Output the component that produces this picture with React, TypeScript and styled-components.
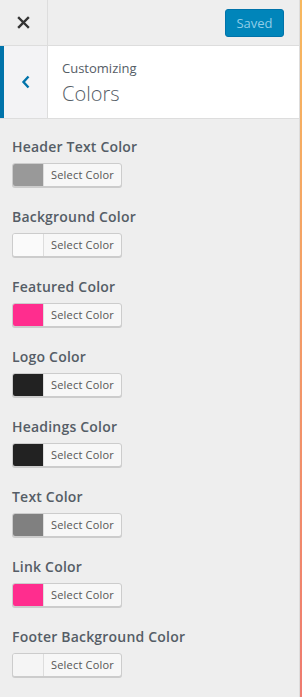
import * as React from 'react'
import styled, { createGlobalStyle } from 'styled-components'

const GlobalStyle = createGlobalStyle`
  html, body {
    margin: 0;
    padding: 0;
    background: #eeeeee;
  }
  body {
    font-family: "Open Sans", "Noto Sans", sans-serif;
  }
`

const colors = [
  { label: 'Header Text Color', value: '#999999' },
  { label: 'Background Color', value: '#fafafa' },
  { label: 'Featured Color', value: '#ff2d8e' },
  { label: 'Logo Color', value: '#222222' },
  { label: 'Headings Color', value: '#222222' },
  { label: 'Text Color', value: '#808080' },
  { label: 'Link Color', value: '#ff2d8e' },
  { label: 'Footer Background Color', value: '#f5f5f5' }
]

const App = () => (
  <Frame>
    <GlobalStyle />
    <Sidebar>
      <Header>
        <CloseButton aria-label='Close'>
          <svg width='13' height='13' viewBox='0 0 13 13'>
            <path d='M2 2 L11 11 M11 2 L2 11' stroke='#333' strokeWidth='2.4' strokeLinecap='square' />
          </svg>
        </CloseButton>
        <SaveButton>Saved</SaveButton>
      </Header>
      <SectionTitle>
        <BackButton aria-label='Back'>
          <svg width='10' height='14' viewBox='0 0 10 14'>
            <path d='M7.5 1.5 L2.5 7 L7.5 12.5' fill='none' stroke='#0073aa' strokeWidth='2.4' />
          </svg>
        </BackButton>
        <TitleText>
          <Action>Customizing</Action>
          <Title>Colors</Title>
        </TitleText>
      </SectionTitle>
      <Controls>
        {colors.map(c => (
          <Control key={c.label}>
            <ControlLabel>{c.label}</ControlLabel>
            <ColorButton>
              <Swatch color={c.value} />
              <ButtonText>Select Color</ButtonText>
            </ColorButton>
          </Control>
        ))}
      </Controls>
    </Sidebar>
    <Preview />
  </Frame>
)

const Frame = styled.div`
  display: flex;
  width: 302px;
  height: 697px;
  overflow: hidden;
`
const Sidebar = styled.div`
  width: 299px;
  border-right: 1px solid #dddddd;
  background: #eeeeee;
  display: flex;
  flex-direction: column;
`
const Preview = styled.div`
  flex: 1;
  background: linear-gradient(to bottom, #f7b85e, #ee7a6f);
`
const Header = styled.div`
  height: 45px;
  border-bottom: 1px solid #dddddd;
  display: flex;
  align-items: center;
  justify-content: space-between;
  padding-right: 15px;
`
const CloseButton = styled.div`
  width: 47px;
  height: 45px;
  border-right: 1px solid #dddddd;
  display: flex;
  align-items: center;
  justify-content: center;
`
const SaveButton = styled.div`
  width: 57px;
  height: 26px;
  border: 1px solid #0073aa;
  border-radius: 3px;
  background: #0085ba;
  color: #8fcde8;
  font-size: 13px;
  display: flex;
  align-items: center;
  justify-content: center;
`
const SectionTitle = styled.div`
  display: flex;
  background: #ffffff;
  border-bottom: 1px solid #dddddd;
  height: 72px;
`
const BackButton = styled.div`
  width: 43px;
  border-left: 4px solid #0073aa;
  border-right: 1px solid #dddddd;
  background: #f3f3f5;
  display: flex;
  align-items: center;
  justify-content: center;
`
const TitleText = styled.div`
  padding: 10px 14px;
  display: flex;
  flex-direction: column;
`
const Action = styled.span`
  font-size: 13px;
  line-height: 24px;
  color: #555d66;
`
const Title = styled.span`
  font-size: 20px;
  line-height: 28px;
  color: #555d66;
  font-weight: 300;
`
const Controls = styled.div`
  padding: 16px 12px 0;
  display: flex;
  flex-direction: column;
`
const Control = styled.div`
  margin-bottom: 12px;
  display: flex;
  flex-direction: column;
  align-items: flex-start;
`
const ControlLabel = styled.span`
  font-size: 14px;
  line-height: 24px;
  font-weight: 600;
  letter-spacing: 0.2px;
  color: #555d66;
  margin-bottom: 4px;
`
const ColorButton = styled.div`
  display: flex;
  height: 22px;
  border: 1px solid #cccccc;
  border-radius: 3px;
  box-shadow: 0 1px 0 #cccccc;
  background: #f7f7f7;
  overflow: hidden;
  margin-bottom: 6px;
`
const Swatch = styled.div<{ color: string }>`
  width: 30px;
  background: ${p => p.color};
  border-right: 1px solid #dddddd;
`
const ButtonText = styled.span`
  padding: 0 7px;
  font-size: 11px;
  line-height: 22px;
  letter-spacing: 0.2px;
  color: #555555;
`

export default App
